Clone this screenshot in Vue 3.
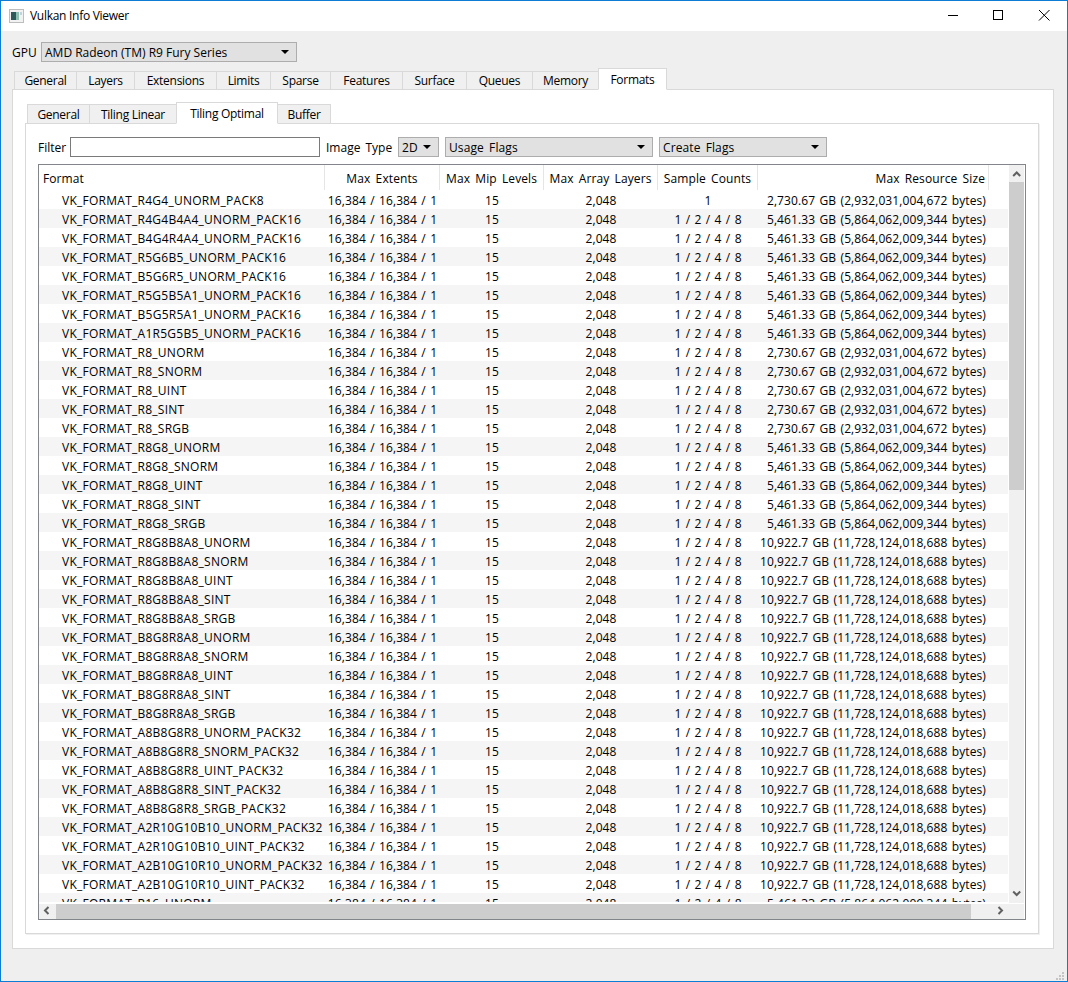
<script setup>
const mainTabs = [
  ['General', 63], ['Layers', 59], ['Extensions', 83], ['Limits', 55], ['Sparse', 61],
  ['Features', 73], ['Surface', 65], ['Queues', 67], ['Memory', 67], ['Formats', 69]
]
const subTabs = [['General', 63], ['Tiling Linear', 88], ['Tiling Optimal', 102], ['Buffer', 54]]
const headers = ['Format', 'Max Extents', 'Max Mip Levels', 'Max Array Layers', 'Sample Counts', 'Max Resource Size']
const sizes = {
  a: '2,730.67 GB (2,932,031,004,672 bytes)',
  b: '5,461.33 GB (5,864,062,009,344 bytes)',
  c: '10,922.7 GB (11,728,124,018,688 bytes)'
}
const formats = [
  ['R4G4_UNORM_PACK8', 'a'], ['R4G4B4A4_UNORM_PACK16', 'b'], ['B4G4R4A4_UNORM_PACK16', 'b'],
  ['R5G6B5_UNORM_PACK16', 'b'], ['B5G6R5_UNORM_PACK16', 'b'], ['R5G5B5A1_UNORM_PACK16', 'b'],
  ['B5G5R5A1_UNORM_PACK16', 'b'], ['A1R5G5B5_UNORM_PACK16', 'b'], ['R8_UNORM', 'a'], ['R8_SNORM', 'a'],
  ['R8_UINT', 'a'], ['R8_SINT', 'a'], ['R8_SRGB', 'a'], ['R8G8_UNORM', 'b'], ['R8G8_SNORM', 'b'],
  ['R8G8_UINT', 'b'], ['R8G8_SINT', 'b'], ['R8G8_SRGB', 'b'], ['R8G8B8A8_UNORM', 'c'], ['R8G8B8A8_SNORM', 'c'],
  ['R8G8B8A8_UINT', 'c'], ['R8G8B8A8_SINT', 'c'], ['R8G8B8A8_SRGB', 'c'], ['B8G8R8A8_UNORM', 'c'],
  ['B8G8R8A8_SNORM', 'c'], ['B8G8R8A8_UINT', 'c'], ['B8G8R8A8_SINT', 'c'], ['B8G8R8A8_SRGB', 'c'],
  ['A8B8G8R8_UNORM_PACK32', 'c'], ['A8B8G8R8_SNORM_PACK32', 'c'], ['A8B8G8R8_UINT_PACK32', 'c'],
  ['A8B8G8R8_SINT_PACK32', 'c'], ['A8B8G8R8_SRGB_PACK32', 'c'], ['A2R10G10B10_UNORM_PACK32', 'c'],
  ['A2R10G10B10_UINT_PACK32', 'c'], ['A2B10G10R10_UNORM_PACK32', 'c'], ['A2B10G10R10_UINT_PACK32', 'c'],
  ['R16_UNORM', 'b']
]
const rows = formats.map(([name, size], i) => ({
  name: 'VK_FORMAT_' + name,
  samples: i === 0 ? '1' : '1 / 2 / 4 / 8',
  size: sizes[size]
}))
</script>

<template>
  <div class="window">
    <header class="titlebar">
      <svg class="appicon" width="15" height="14" viewBox="0 0 15 14">
        <rect x="0.5" y="0.5" width="14" height="13" fill="#f2f2f2" stroke="#bdbdbd" />
        <rect x="2" y="3" width="5" height="8" fill="#2f5a5c" />
        <rect x="7" y="3" width="3" height="8" fill="#8fbfb0" />
        <rect x="11" y="3" width="2" height="3" fill="#c3d2e0" />
      </svg>
      <span class="title">Vulkan Info Viewer</span>
      <div class="controls">
        <svg width="46" height="30" viewBox="0 0 46 30"><path d="M18 14.5H28" stroke="#000" fill="none" /></svg>
        <svg width="46" height="30" viewBox="0 0 46 30"><rect x="17.5" y="9.5" width="9" height="9" stroke="#000" fill="none" /></svg>
        <svg width="46" height="30" viewBox="0 0 46 30"><path d="M17 9L27.5 19.5M27.5 9L17 19.5" stroke="#000" fill="none" /></svg>
      </div>
    </header>

    <main class="content">
      <div class="gpurow">
        <label>GPU</label>
        <div class="combo gpucombo"><span>AMD Radeon (TM) R9 Fury Series</span><i class="arrow"></i></div>
      </div>

      <div class="tabbar maintabs">
        <div v-for="(t, i) in mainTabs" :key="t[0]" class="tab" :class="{ active: i === 9 }" :style="{ width: t[1] + 'px' }">{{ t[0] }}</div>
      </div>

      <section class="pane">
        <div class="tabbar subtabs">
          <div v-for="(t, i) in subTabs" :key="t[0]" class="tab" :class="{ active: i === 2 }" :style="{ width: t[1] + 'px' }">{{ t[0] }}</div>
        </div>

        <div class="subpane">
          <div class="filters">
            <label class="lfilter">Filter</label>
            <div class="input"></div>
            <label class="ltype">Image Type</label>
            <div class="combo c2d"><span>2D</span><i class="arrow"></i></div>
            <div class="combo cusage"><span>Usage Flags</span><i class="arrow"></i></div>
            <div class="combo ccreate"><span>Create Flags</span><i class="arrow"></i></div>
          </div>

          <div class="table">
            <div class="tablemain">
              <div class="viewport">
                <div class="row head">
                  <div v-for="h in headers" :key="h" class="cell">{{ h }}</div>
                </div>
                <div class="body">
                  <div v-for="(r, i) in rows" :key="r.name" class="row" :class="{ alt: i % 2 === 1 }">
                    <div class="cell">{{ r.name }}</div>
                    <div class="cell">16,384 / 16,384 / 1</div>
                    <div class="cell">15</div>
                    <div class="cell">2,048</div>
                    <div class="cell">{{ r.samples }}</div>
                    <div class="cell">{{ r.size }}</div>
                  </div>
                </div>
              </div>
              <div class="vbar">
                <svg class="sarrow" width="15" height="17" viewBox="0 0 15 17"><path d="M4.2 11L7.7 7.5L11.2 11" stroke="#606060" stroke-width="2" fill="none" /></svg>
                <div class="vthumb"></div>
                <div class="vspace"></div>
                <svg class="sarrow" width="15" height="17" viewBox="0 0 15 17"><path d="M4.2 5.5L7.7 9L11.2 5.5" stroke="#606060" stroke-width="2" fill="none" /></svg>
              </div>
            </div>
            <div class="hbar">
              <svg class="sarrow" width="17" height="15" viewBox="0 0 17 15"><path d="M9.5 3L6 6.5L9.5 10" stroke="#606060" stroke-width="2" fill="none" /></svg>
              <div class="hthumb"></div>
              <div class="hspace"></div>
              <svg class="sarrow" width="17" height="15" viewBox="0 0 17 15"><path d="M6.5 3L10 6.5L6.5 10" stroke="#606060" stroke-width="2" fill="none" /></svg>
              <div class="corner"></div>
            </div>
          </div>
        </div>
      </section>
    </main>

    <svg class="grip" width="12" height="12" viewBox="0 0 12 12" fill="#c4c4c4">
      <rect x="7" y="3" width="2" height="2" />
      <rect x="4" y="6" width="2" height="2" /><rect x="7" y="6" width="2" height="2" />
      <rect x="1" y="9" width="2" height="2" /><rect x="4" y="9" width="2" height="2" /><rect x="7" y="9" width="2" height="2" />
    </svg>
  </div>
</template>

<style>
html, body { margin: 0; background: #efefef; }
</style>

<style scoped>
.window {
  position: relative;
  width: 1068px;
  height: 982px;
  box-sizing: border-box;
  border: 1px solid #0c7cd5;
  background: #efefef;
  font-family: "Open Sans", "Noto Sans", sans-serif;
  font-size: 12px;
  color: #000;
  overflow: hidden;
  display: flex;
  flex-direction: column;
}
.titlebar {
  height: 30px;
  background: #fff;
  display: flex;
  align-items: center;
  flex: none;
}
.appicon { margin-left: 8px; margin-top: -1px; }
.title { margin-left: 6px; letter-spacing: -0.28px; margin-top: -1px; }
.controls { margin-left: auto; display: flex; margin-right: -1px; }
.content { padding: 11px 13px 0 11px; }
.gpurow { display: flex; align-items: center; height: 20px; }
.gpurow label { width: 29px; }
.combo {
  box-sizing: border-box;
  height: 20px;
  background: #e1e1e1;
  border: 1px solid #adadad;
  display: flex;
  align-items: center;
  justify-content: space-between;
  padding: 0 7px 0 3px;
}
.arrow {
  width: 0;
  height: 0;
  border-left: 4px solid transparent;
  border-right: 4px solid transparent;
  border-top: 4px solid #000;
}
.gpucombo { width: 256px; }
.filters .combo span { letter-spacing: 0.1px; word-spacing: 2px; }
.tabbar { display: flex; align-items: flex-end; height: 21px; position: relative; z-index: 1; }
.maintabs { margin-top: 6px; padding-left: 2px; }
.subtabs { padding-left: 2px; }
.tab {
  box-sizing: border-box;
  height: 19px;
  margin-bottom: -1px;
  margin-left: -1px;
  background: #f0f0f0;
  border: 1px solid #d9d9d9;
  display: flex;
  align-items: center;
  justify-content: center;
  letter-spacing: -0.28px;
}
.subtabs .tab { height: 20px; }
.tab:first-child { margin-left: 0; }
.maintabs .tab.active, .subtabs .tab.active {
  height: 22px;
  background: #fff;
  border-bottom-color: #fff;
  position: relative;
}
.pane {
  box-sizing: border-box;
  height: 860px;
  background: #fff;
  border: 1px solid #d9d9d9;
  padding: 12px 14px 0 12px;
}
.subpane {
  box-sizing: border-box;
  height: 811px;
  border: 1px solid #d9d9d9;
  box-shadow: 1px 1px 0 #f0f0f0;
  padding: 13px 0 0 12px;
}
.filters { display: flex; align-items: center; height: 20px; }
.lfilter { width: 32px; }
.input { box-sizing: border-box; width: 250px; height: 20px; border: 1px solid #7a7a7a; background: #fff; }
.ltype { width: 72px; margin-left: 6px; word-spacing: 2px; }
.c2d { width: 41px; }
.cusage { width: 208px; margin-left: 6px; }
.ccreate { width: 168px; margin-left: 6px; }
.table {
  box-sizing: border-box;
  width: 988px;
  height: 756px;
  margin-top: 7px;
  border: 1px solid #82858a;
  display: flex;
  flex-direction: column;
}
.tablemain { display: flex; height: 738px; flex: none; }
.viewport { width: 970px; overflow: hidden; background: #fff; }
.body { height: 712px; overflow: hidden; }
.row {
  display: grid;
  grid-template-columns: 286px 115px 104px 114px 100px 231px;
  width: 969px;
  height: 19px;
  line-height: 22px;
  white-space: nowrap;
  letter-spacing: 0.1px;
  word-spacing: 1.1px;
}
.row.alt { background: #f5f5f5; }
.cell { text-align: center; overflow: hidden; }
.body .cell { height: 19px; }
.cell:first-child { text-align: left; padding-left: 23px; letter-spacing: 0.26px; }
.cell:last-child { text-align: right; padding-right: 3px; }
.head { height: 25px; line-height: 27px; word-spacing: 2px; }
.head .cell { border-right: 1px solid #e5e5e5; box-sizing: border-box; height: 25px; }
.head .cell:first-child { padding-left: 4px; letter-spacing: 0.1px; }
.vbar {
  width: 15px;
  display: flex;
  flex-direction: column;
  background: #f0f0f0;
  border-right: 1px solid #fff;
}
.sarrow { flex: none; }
.vthumb { height: 308px; background: #cdcdcd; flex: none; }
.vspace, .hspace { flex: 1; }
.hbar {
  height: 16px;
  display: flex;
  background: #f0f0f0;
  flex: none;
  border-top: 1px solid #fff;
  box-sizing: border-box;
}
.hthumb { width: 915px; background: #cdcdcd; flex: none; }
.corner { width: 15px; background: #f0f0f0; border-right: 1px solid #fff; flex: none; }
.grip { position: absolute; right: 0; bottom: 0; }
</style>
